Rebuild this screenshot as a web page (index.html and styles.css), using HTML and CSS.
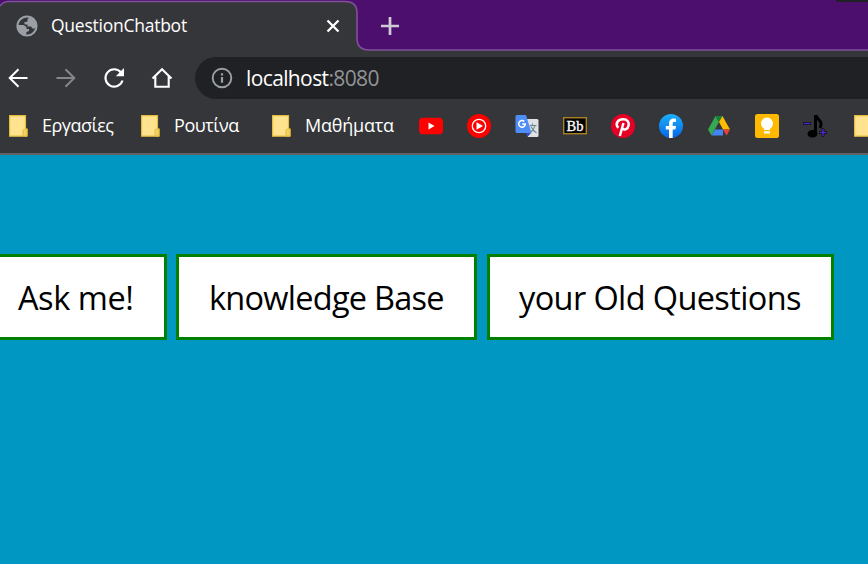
FILE: index.html
```html
<!DOCTYPE html>
<html lang="el">
<head>
<meta charset="utf-8">
<title>QuestionChatbot</title>
<link rel="stylesheet" href="styles.css">
</head>
<body>
<header class="chrome">
  <div class="tabstrip">
    <svg class="tabshape" width="868" height="51" viewBox="0 0 868 51"><path d="M0 51V6Q3 1.5 9 1.5H345Q357 1.5 357 13V38Q357 50 369 50H868V51Z" fill="#35363a"/><path d="M0 6Q3 1.5 9 1.5H345Q357 1.5 357 13V38Q357 50 369 50H868" fill="none" stroke="#80509a" stroke-width="1.6"/><path d="M836 0H868V2H836Z" fill="#202124"/></svg>
    <div class="tab">
      <svg class="globe" width="22" height="22" viewBox="0 0 22 22"><circle cx="11" cy="11" r="9.600" fill="#35363a" stroke="#9aa0a6" stroke-width="2"/><path d="M11 1.500C16 1 20.500 5 20.500 11L19 13.500H16.500L15 11.500H11.500V9.500H9L8 7.500L11.500 6.500V4L14 2.500Z" fill="#9aa0a6"/><path d="M1.500 10H7.500L10.500 12V14H13V16L10.500 17L10 20.500C5 20 1.500 16 1.500 10Z" fill="#9aa0a6"/></svg>
      <span class="title">QuestionChatbot</span>
      <svg class="close" width="14" height="14" viewBox="0 0 14 14"><path d="M1.500 1.500L12.500 12.500M12.500 1.500L1.500 12.500" stroke="#fff" stroke-width="2.300"/></svg>
    </div>
    <svg class="plus" width="18" height="18" viewBox="0 0 18 18"><path d="M9 0V18M0 9H18" stroke="#cfcbd5" stroke-width="2.700"/></svg>
  </div>
  <nav class="toolbar">
    <svg width="20" height="20" viewBox="0 0 20 20"><path d="M19.500 10H2M10.500 1.200L1.700 10L10.500 18.800" fill="none" stroke="#fff" stroke-width="2"/></svg>
    <svg width="20" height="20" viewBox="0 0 20 20"><path d="M.500 10H18M9.500 1.200L18.300 10L9.500 18.800" fill="none" stroke="#85868a" stroke-width="2"/></svg>
    <svg class="reload" width="22" height="22" viewBox="0 0 22 22"><path d="M18 5.500A8.700 8.700 0 1 0 19.500 13.500" fill="none" stroke="#fff" stroke-width="2.100"/><path d="M21 1V9.200H12.800Z" fill="#fff"/></svg>
    <svg class="home" width="22" height="22" viewBox="0 0 22 22"><path d="M1.500 11.500L11 2.200L20.500 11.500M4.300 9.500V19.700H17.700V9.500" fill="none" stroke="#fff" stroke-width="2.100"/></svg>
    <div class="omnibox">
      <svg width="22" height="22" viewBox="0 0 22 22"><circle cx="11" cy="11" r="9.300" fill="none" stroke="#9aa0a6" stroke-width="1.900"/><path d="M11 10V15.800M11 6.200V8.400" stroke="#9aa0a6" stroke-width="2.200"/></svg>
      <span class="url">localhost<span class="port">:8080</span></span>
    </div>
  </nav>
  <nav class="bookmarks">
    <div class="folder f1"><svg width="19" height="22" viewBox="0 0 19 22"><path d="M.600.600H16.500V14H18V21.200H.600Z" fill="#ffe38f" stroke="#e4bd3f" stroke-width="1.200"/><path d="M14 21V15.500Q14 14 15.500 14H18V21Z" fill="#f6d35f" stroke="#e4bd3f"/></svg><span>Εργασίες</span></div>
    <div class="folder f2"><svg width="19" height="22" viewBox="0 0 19 22"><path d="M.600.600H16.500V14H18V21.200H.600Z" fill="#ffe38f" stroke="#e4bd3f" stroke-width="1.200"/><path d="M14 21V15.500Q14 14 15.500 14H18V21Z" fill="#f6d35f" stroke="#e4bd3f"/></svg><span>Ρουτίνα</span></div>
    <div class="folder f3"><svg width="19" height="22" viewBox="0 0 19 22"><path d="M.600.600H16.500V14H18V21.200H.600Z" fill="#ffe38f" stroke="#e4bd3f" stroke-width="1.200"/><path d="M14 21V15.500Q14 14 15.500 14H18V21Z" fill="#f6d35f" stroke="#e4bd3f"/></svg><span>Μαθήματα</span></div>
    <div class="sites">
      <svg viewBox="0 0 24 24"><rect y="3.700" width="24" height="16.600" rx="4" fill="red"/><path d="M9.500 8.400L15.500 12L9.500 15.600Z" fill="#fff"/></svg>
      <svg viewBox="0 0 24 24"><circle cx="12" cy="12" r="12" fill="red"/><circle cx="12" cy="12" r="6.700" fill="none" stroke="#fff" stroke-width="1.300"/><path d="M9.500 8.200L16 12L9.500 15.800Z" fill="#fff"/></svg>
      <svg viewBox="0 0 24 24"><path d="M10 5H22Q23.500 5 23.500 6.500V21.500Q23.500 23 22 23H13Z" fill="#dfe1e4"/><path d="M11 19H16L12.500 23Z" fill="#3849c5"/><path d="M2 1H11L16.500 19H2Q.500 19 .500 17.500V2.500Q.500 1 2 1Z" fill="#4f8df6"/><path d="M9.300 7.500A3.300 3.300 0 1 0 10.300 10H7.200" fill="none" stroke="#fff" stroke-width="1.500"/><path d="M14.500 11.500H21.500M17.500 9.500V11.500M20 11.500Q19 16 15.500 18.500M16 12.500Q18 17 21.500 18.800" fill="none" stroke="#6b8790" stroke-width="1.100"/></svg>
      <svg viewBox="0 0 24 24"><rect x=".700" y="3.700" width="22.600" height="16" fill="#050505" stroke="#a9821d" stroke-width="1.400"/><text class="bb" x="3.500" y="16.700" textLength="17" lengthAdjust="spacingAndGlyphs">Bb</text></svg>
      <svg viewBox="0 0 24 24"><circle cx="12" cy="12" r="12" fill="#e60023"/><path d="M7.300 13.800C3.500 9.500 7 5.300 12.200 5.300C16.500 5.300 18.300 8.200 17.600 11.500C17 15 13.300 17 11 14.300M12.500 9L8.800 22" fill="none" stroke="#fff" stroke-width="2.500"/></svg>
      <svg viewBox="0 0 24 24"><defs><linearGradient id="fb" x2="0" y2="1"><stop stop-color="#1bb0fb"/><stop offset="1" stop-color="#0866e6"/></linearGradient></defs><circle cx="12" cy="12" r="12" fill="url(#fb)"/><path d="M10 24V15.500H6.800V12H10V9.300C10 6 12 4.500 14.700 4.500L17 4.700V7.700H15.500C14 7.700 13.700 8.500 13.700 9.500V12H17L16.400 15.500H13.700V24Z" fill="#fff"/></svg>
      <svg viewBox="0 0 24 24"><path d="M8.500 2L12 8L4.500 21.500L1 15.500Z" fill="#36a852"/><path d="M8.500 2H15.500L12 8Z" fill="#188038"/><path d="M15.500 2L23 15.500H16L12 8Z" fill="#fbbc04"/><path d="M8 15.500H16V21.500H4.500Z" fill="#4285f4"/><path d="M16 15.500H23L19.500 21.500Z" fill="#ea4335"/></svg>
      <svg viewBox="0 0 24 24"><rect width="24" height="24" rx="2.500" fill="#ffba00"/><path d="M9 16V14.700A6 6 0 1 1 15 14.700V16ZM9 17.300H15V19.500H9Z" fill="#fff"/></svg>
      <svg viewBox="0 0 24 24"><path d="M12.500 1V19M13 1C13.500 6 21 7 17 14" fill="none" stroke="#000" stroke-width="3"/><ellipse cx="9.500" cy="19.800" rx="5" ry="3.700" fill="#000"/><path d="M0 9.500H8M20 14.500V22.500M16 18.500H24" stroke="#000" stroke-width="2.600"/><path d="M.500 9.500H7.500M20 15V22M16.500 18.500H23.500" stroke="#4d2cc0" stroke-width="1.500"/></svg>
    </div>
    <svg class="cut" width="19" height="22" viewBox="0 0 19 22"><path d="M.600.600H16.500V14H18V21.200H.600Z" fill="#ffe38f" stroke="#e4bd3f" stroke-width="1.200"/></svg>
  </nav>
</header>
<main>
  <div class="menu">
    <button class="b1"><span>Ask me!</span></button>
    <button class="b2"><span>knowledge Base</span></button>
    <button class="b3"><span>your Old Questions</span></button>
  </div>
</main>
</body>
</html>
```
FILE: styles.css
```css
* { box-sizing: border-box; }
body { margin: 0; width: 868px; height: 564px; overflow: hidden; background: #0098c3; font-family: "Open Sans", "Noto Sans", sans-serif; }
svg { display: block; flex: none; }
span { white-space: nowrap; }
.chrome { height: 155px; background: #35363a; border-bottom: 2px solid #626366; color: #fff; overflow: hidden; }
.tabstrip { position: relative; display: flex; height: 51px; background: #4d0f6e; }
.tabshape { position: absolute; inset: 0; }
.tab { position: relative; display: flex; align-items: center; width: 357px; padding: 0 17px 0 16px; }
.title { margin: -1px 0 0 13px; font-size: 17.5px; letter-spacing: -.25px; }
.close { margin-left: auto; }
.plus { position: relative; margin: 17px 0 0 24px; }
.toolbar { display: flex; align-items: center; height: 54px; padding-left: 8px; gap: 28px; }
.reload { margin-left: -1px; }
.home { margin-left: -2px; }
.omnibox { display: flex; align-items: center; flex: 1; height: 42px; margin-left: -6px; padding-left: 16px; border-radius: 21px 0 0 21px; background: #202124; }
.url { margin-left: 13px; font-size: 21px; letter-spacing: -.62px; }
.port { color: #929497; }
.bookmarks { display: flex; align-items: center; height: 42px; padding-left: 9px; }
.folder { display: flex; align-items: center; gap: 14px; flex: none; font-size: 18px; }
.folder span { margin-top: -2px; }
.f1 { width: 132px; letter-spacing: -.5px; }
.f2 { width: 131px; letter-spacing: -.45px; }
.f3 { width: 147px; letter-spacing: -.2px; }
.sites { display: flex; gap: 24px; flex: none; }
.sites svg { width: 24px; height: 24px; }
.cut { margin-left: 27px; }
.bb { font: 15px "Liberation Serif", serif; fill: #fff; stroke: #fff; stroke-width: .3px; }
.menu { display: flex; padding-top: 99px; }
button { flex: none; height: 86px; padding: 0 0 0 30px; border: 3px solid #008000; border-radius: 0; background: #fff; color: #000; font: 400 32.5px "Open Sans", "Noto Sans", sans-serif; text-align: left; }
.b1 { width: 170px; margin-left: -3px; padding-left: 18px; letter-spacing: -.45px; }
.b2 { width: 301px; margin-left: 9px; letter-spacing: -.74px; }
.b3 { width: 347px; margin-left: 10px; padding-left: 29px; letter-spacing: -.62px; }
```
